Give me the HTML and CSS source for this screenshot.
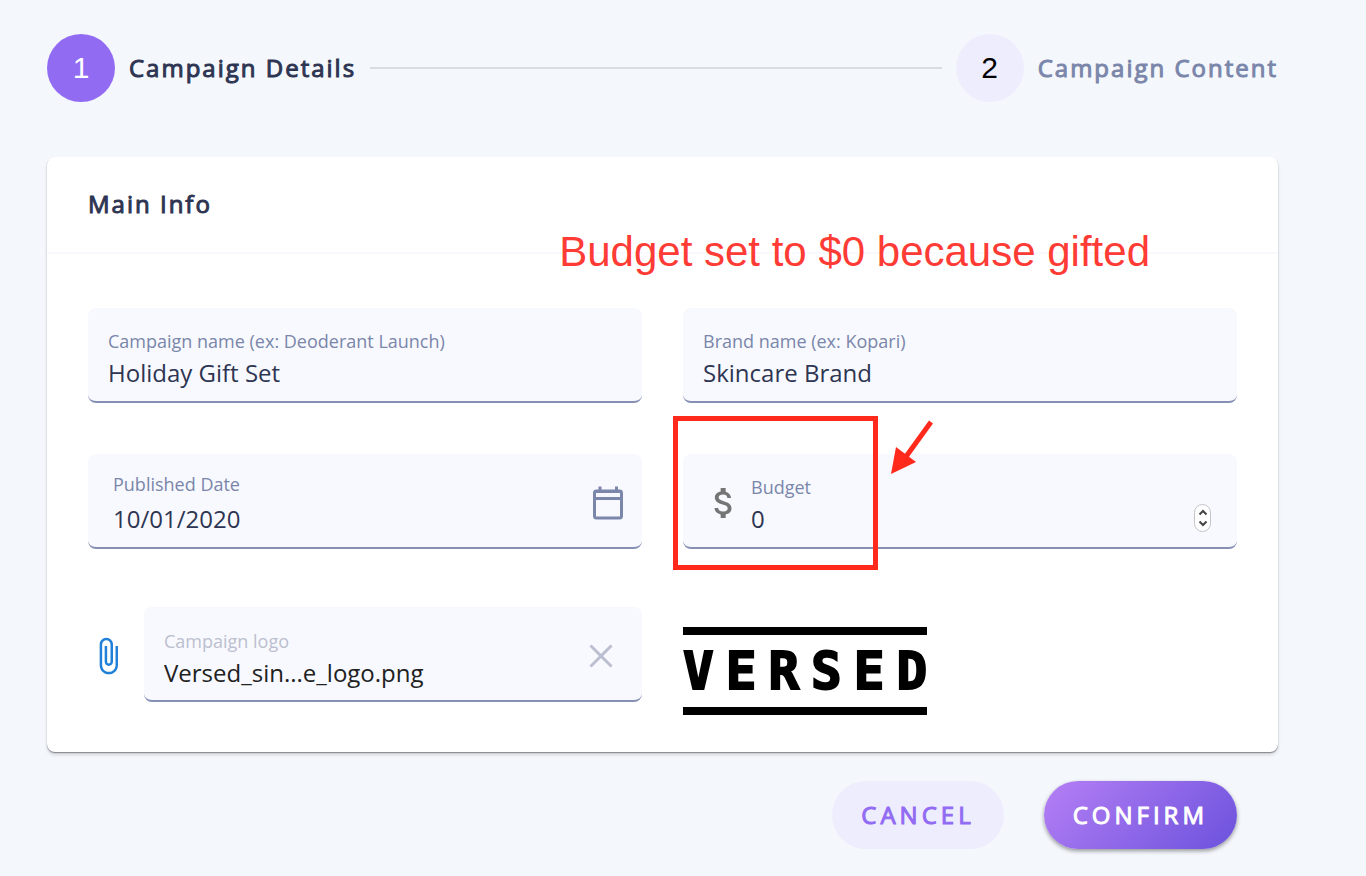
FILE: index.html
```html
<!DOCTYPE html>
<html lang="en">
<head>
<meta charset="utf-8">
<meta name="viewport" content="width=device-width, initial-scale=1">
<title>Campaign Details</title>
<link rel="stylesheet" href="styles.css">
</head>
<body>
<main class="page">
  <ol class="steps">
    <li class="step step-active"><span class="step-number">1</span><span class="step-label">Campaign Details</span></li>
    <li class="step-line" aria-hidden="true"></li>
    <li class="step"><span class="step-number">2</span><span class="step-label">Campaign Content</span></li>
  </ol>

  <form class="form">
    <section class="card">
      <header class="card-header">
        <h1 class="card-title">Main Info</h1>
        <p class="note">Budget set to $0 because gifted</p>
      </header>
      <div class="fields">
        <div class="field">
          <div class="field-text">
            <label class="field-label" for="campaign">Campaign name (ex: Deoderant Launch)</label>
            <input class="field-input" id="campaign" type="text" value="Holiday Gift Set">
          </div>
        </div>
        <div class="field">
          <div class="field-text">
            <label class="field-label" for="brand">Brand name (ex: Kopari)</label>
            <input class="field-input" id="brand" type="text" value="Skincare Brand">
          </div>
        </div>
        <div class="field field-date">
          <div class="field-text">
            <label class="field-label" for="date">Published Date</label>
            <input class="field-input" id="date" type="text" value="10/01/2020">
          </div>
          <button class="icon-button" type="button" aria-label="Choose date">
            <svg width="32" height="36" viewBox="0 0 32 36" fill="none" stroke="#7a86aa" stroke-width="3">
              <rect x="2.500" y="6" width="27" height="27" rx="2"/>
              <path d="M2 6.500h28M2 13.500h28" />
              <path d="M8 1.500v5M24.500 1.500v5"/>
            </svg>
          </button>
        </div>
        <div class="field field-budget">
          <svg class="dollar" width="40" height="40" viewBox="0 0 24 24" fill="#757575" aria-hidden="true">
            <path d="M11.800 10.900c-2.270-.590-3-1.200-3-2.150 0-1.090 1.010-1.850 2.700-1.850 1.780 0 2.440.850 2.500 2.100h2.210c-.070-1.720-1.120-3.300-3.210-3.810V3h-3v2.160c-1.940.420-3.500 1.680-3.500 3.610 0 2.310 1.910 3.460 4.700 4.130 2.500.600 3 1.480 3 2.410 0 .690-.490 1.790-2.700 1.790-2.060 0-2.870-.920-2.980-2.100h-2.200c.120 2.190 1.760 3.420 3.680 3.830V21h3v-2.150c1.950-.370 3.500-1.500 3.500-3.550 0-2.840-2.430-3.810-4.700-4.400z"/>
          </svg>
          <div class="field-text">
            <label class="field-label" for="budget">Budget</label>
            <input class="field-input" id="budget" type="number" value="0">
          </div>
          <button class="stepper" type="button" aria-label="Change budget">
            <svg width="10" height="20" viewBox="0 0 10 20" fill="none" stroke="#444" stroke-width="2">
              <path d="M1.500 6.500L5 3l3.500 3.500M1.500 13.500L5 17l3.500-3.500"/>
            </svg>
          </button>
          <div class="highlight"></div>
          <svg class="arrow" width="44" height="58" viewBox="0 0 44 58" aria-hidden="true">
            <path d="M42 4L16 40" stroke="#ff2a1c" stroke-width="5"/>
            <path d="M2 56L7 29L27 44Z" fill="#ff2a1c"/>
          </svg>
        </div>
        <div class="upload">
          <svg class="clip" width="40" height="40" viewBox="0 0 24 24" fill="#2180d8" aria-hidden="true">
            <path d="M16.500 6v11.500c0 2.210-1.790 4-4 4s-4-1.790-4-4V5c0-1.380 1.120-2.500 2.500-2.500s2.500 1.120 2.500 2.500v10.500c0 .550-.450 1-1 1s-1-.450-1-1V6H10v9.500c0 1.380 1.120 2.500 2.500 2.500s2.500-1.120 2.500-2.500V5c0-2.210-1.790-4-4-4S7 2.790 7 5v12.500c0 3.040 2.460 5.500 5.500 5.500s5.500-2.460 5.500-5.500V6h-1.500z"/>
          </svg>
          <div class="field field-logo">
            <div class="field-text">
              <label class="field-label" for="logo">Campaign logo</label>
              <input class="field-input" id="logo" type="text" readonly value="Versed_sin...e_logo.png">
            </div>
            <button class="icon-button" type="button" aria-label="Remove logo">
              <svg width="24" height="24" viewBox="0 0 24 24" stroke="#bbbfcf" stroke-width="3">
                <path d="M1.500 1.500l21 21M22.500 1.500l-21 21"/>
              </svg>
            </button>
          </div>
        </div>
        <div class="brand-logo">VERSED</div>
      </div>
    </section>
    <div class="actions">
      <button class="button button-cancel" type="button">CANCEL</button>
      <button class="button button-confirm" type="submit">CONFIRM</button>
    </div>
  </form>
</main>
</body>
</html>
```
FILE: styles.css
```css
* { box-sizing: border-box; }

body {
  margin: 0;
  background: #f4f7fc;
  color: #2e3552;
  font-family: "Open Sans", "Noto Sans", sans-serif;
}

button, input { font: inherit; }

.page { padding: 34px 88px 24px 47px; }

.steps {
  display: flex;
  align-items: center;
  gap: 14px;
  margin: 0 0 55px;
  padding: 0;
  list-style: none;
}

.step {
  display: flex;
  align-items: center;
  gap: 14px;
  color: #7a86aa;
}

.step-active { color: #2e3552; }

.step-number {
  display: grid;
  place-items: center;
  width: 68px;
  height: 68px;
  border-radius: 50%;
  background: #eeedfd;
  color: #000;
  font: 30px "Liberation Sans", Arial, sans-serif;
}

.step-active .step-number {
  background: #926bf3;
  color: #fff;
}

.step-label {
  padding-bottom: 2px;
  font-size: 24px;
  font-weight: 500;
  letter-spacing: 2px;
  white-space: nowrap;
}

.step-label, .card-title, .button { -webkit-text-stroke: 1px currentColor; }

.step-line {
  flex: 1;
  height: 2px;
  background: #d9dce3;
}

.card {
  border-radius: 8px;
  background: #fff;
  box-shadow: 0 1px 1px #85878f, 0 3px 4px -1px rgba(0, 0, 0, 0.2);
}

.card-header {
  position: relative;
  padding: 30px 41px 32px;
  border-bottom: 2px solid #f8f9fe;
}

.card-title {
  margin: 0;
  font-size: 24px;
  font-weight: 500;
  line-height: 33px;
  letter-spacing: 2px;
}

.note {
  position: absolute;
  top: 71px;
  right: 128px;
  margin: 0;
  color: #ff3b36;
  font: 42px/48px "Liberation Sans", Arial, sans-serif;
  white-space: nowrap;
}

.fields {
  display: grid;
  grid-template-columns: 1fr 1fr;
  column-gap: 41px;
  padding: 54px 41px 50px;
}

.field {
  position: relative;
  display: flex;
  align-items: center;
  min-width: 0;
  height: 95px;
  margin-bottom: 51px;
  padding: 4px 20px 0;
  border-bottom: 2px solid #8690b5;
  border-radius: 8px;
  background: #f8f9fe;
}

.field-text {
  display: flex;
  flex: 1;
  flex-direction: column;
  gap: 4px;
  min-width: 0;
  padding-top: 4px;
}

.field-label {
  color: #7a86aa;
  font-size: 18px;
  line-height: 24px;
}

.field-input {
  width: 100%;
  height: 32px;
  padding: 0;
  border: 0;
  outline: 0;
  background: none;
  color: #2e3552;
  font-size: 24px;
  line-height: 32px;
  appearance: textfield;
}

.field-input::-webkit-inner-spin-button { appearance: none; }

.field-date { padding: 4px 18px 0 25px; }
.field-date .field-text { gap: 7px; padding-top: 1px; }

.field-budget { padding: 4px 26px 0 21px; }

.dollar { margin-right: 7px; }

.icon-button {
  display: grid;
  padding: 0;
  border: 0;
  background: none;
}

.stepper {
  display: grid;
  place-items: center;
  width: 17px;
  height: 28px;
  margin-top: 30px;
  padding: 0;
  border: 1px solid #c4c4c8;
  border-radius: 9px;
  background: #fff;
}

.highlight {
  position: absolute;
  top: -38px;
  left: -10px;
  width: 205px;
  height: 154px;
  border: 5px solid #ff2a1c;
}

.arrow {
  position: absolute;
  top: -36px;
  left: 206px;
}

.upload {
  display: flex;
  align-items: center;
  gap: 16px;
  padding-top: 7px;
}

.clip { margin-top: 2px; }

.field-logo {
  flex: 1;
  margin: 0;
  padding-right: 29px;
}

.field-logo .field-text { padding-top: 6px; }
.field-logo .field-label { color: #bbbfcf; }
.field-logo .field-input { color: #212121; }

.brand-logo {
  justify-self: start;
  align-self: end;
  width: 244px;
  height: 88px;
  margin-bottom: -13px;
  border-top: 8px solid #000;
  border-bottom: 8px solid #000;
  color: #000;
  font: bold 51px/74px "DejaVu Sans Mono", monospace;
  letter-spacing: 12px;
  -webkit-text-stroke: 2px #000;
}

.actions {
  display: flex;
  justify-content: flex-end;
  gap: 40px;
  padding: 29px 41px 0;
}

.button {
  height: 68px;
  padding: 0 29px 2px;
  border: 0;
  border-radius: 34px;
  font-size: 24px;
  font-weight: 500;
  letter-spacing: 4px;
}

.button-cancel {
  background: #eeedfd;
  color: #926bf3;
}

.button-confirm {
  background: linear-gradient(135deg, #b57ff5, #6b52dc);
  box-shadow: 0 2px 4px rgba(0, 0, 0, 0.4);
  color: #fff;
}
```
